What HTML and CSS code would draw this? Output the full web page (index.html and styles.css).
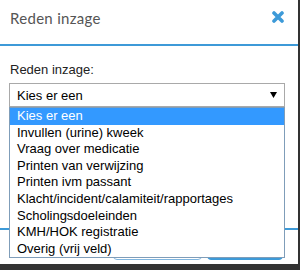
FILE: index.html
```html
<!DOCTYPE html>
<html lang="nl">
<head>
  <meta charset="UTF-8" />
  <title>Reden inzage</title>
  <link rel="stylesheet" href="styles.css">
</head>
<body>
  <div class="modal">
    <header class="modal-header">
      <h2>Reden inzage</h2>
      <a href="#" class="close-btn" aria-label="Sluiten">
        <svg width="12" height="12" viewBox="0 0 12 12">
          <path d="M2 2 L10 10 M10 2 L2 10" stroke="#3d9ad8" stroke-width="3.6" stroke-linecap="round" fill="none"/>
        </svg>
      </a>
    </header>

    <main class="modal-body">
      <label for="reason">Reden inzage:</label>
      <div class="select-wrap">
        <div class="select" id="reason">
          <span>Kies er een</span>
          <svg width="7" height="6" viewBox="0 0 7 6"><path d="M0 0 H7 L3.5 6 Z" fill="#000"/></svg>
        </div>
        <ul class="options">
          <li class="active">Kies er een</li>
          <li>Invullen (urine) kweek</li>
          <li>Vraag over medicatie</li>
          <li>Printen van verwijzing</li>
          <li>Printen ivm passant</li>
          <li>Klacht/incident/calamiteit/rapportages</li>
          <li>Scholingsdoeleinden</li>
          <li>KMH/HOK registratie</li>
          <li>Overig (vrij veld)</li>
        </ul>
      </div>
    </main>

    <footer class="modal-footer">
      <button class="btn-outline" type="button">Annuleren</button>
      <button class="btn-primary" type="button">Opslaan</button>
    </footer>
  </div>
</body>
</html>
```

FILE: styles.css
```css
    body {
      margin: 0;
      padding: 0;
      background-color: #333;
      font-family: "Liberation Sans", Arial, sans-serif;
    }

    .modal {
      width: 298px;
      height: 264px;
      background-color: white;
      display: flex;
      flex-direction: column;
      overflow: hidden;
    }

    .modal-header {
      height: 44px;
      box-sizing: border-box;
      display: flex;
      justify-content: space-between;
      align-items: flex-start;
      padding: 0 14px 0 10px;
      border-bottom: 2px solid #3d9ad8;
      flex-shrink: 0;
      box-sizing: content-box;
    }

    .modal-header h2 {
      margin: 0;
      padding-top: 8px;
      font-family: Lato, "DejaVu Sans", sans-serif;
      font-weight: normal;
      font-size: 15px;
      line-height: 20px;
      color: #555;
      letter-spacing: 0.3px;
    }

    .close-btn {
      display: block;
      margin-top: 11px;
      line-height: 0;
    }

    .modal-body {
      flex: 1;
      padding: 16px 13px 0 9px;
    }

    .modal-body label {
      display: block;
      padding-left: 1px;
      margin-bottom: 6px;
      font-size: 13px;
      line-height: 15px;
      color: #222;
    }

    .select-wrap {
      position: relative;
    }

    .select {
      height: 22px;
      border: 1px solid #a9a9a9;
      display: flex;
      justify-content: space-between;
      align-items: center;
      padding: 0 7px 0 7px;
      font-size: 13px;
      line-height: 15px;
      color: #000;
    }

    .options {
      position: absolute;
      top: 100%;
      left: 0;
      right: 0;
      margin: 0;
      padding: 0;
      list-style: none;
      background-color: white;
      border: 1px solid #7f9db9;
      z-index: 2;
    }

    .options li {
      height: 16.6px;
      padding-left: 7px;
      font-size: 13px;
      line-height: 16.6px;
      color: #000;
      white-space: nowrap;
    }

    .options li.active {
      background-color: #3399ff;
      color: white;
    }

    .modal-footer {
      height: 34px;
      border-top: 2px solid #3d9ad8;
      display: flex;
      justify-content: flex-end;
      align-items: flex-end;
      gap: 5px;
      padding: 0 15px 4px 0;
      box-sizing: border-box;
      flex-shrink: 0;
      height: 36px;
    }

    .modal-footer button {
      height: 26px;
      border-radius: 4px;
      font-family: "Liberation Sans", Arial, sans-serif;
      font-size: 13px;
    }

    .btn-outline {
      width: 89px;
      background-color: white;
      border: 1px solid #7fb6e0;
      color: #3d9ad8;
    }

    .btn-primary {
      width: 76px;
      background-color: #3d9ad8;
      border: 1px solid #3d9ad8;
      color: white;
    }
```
